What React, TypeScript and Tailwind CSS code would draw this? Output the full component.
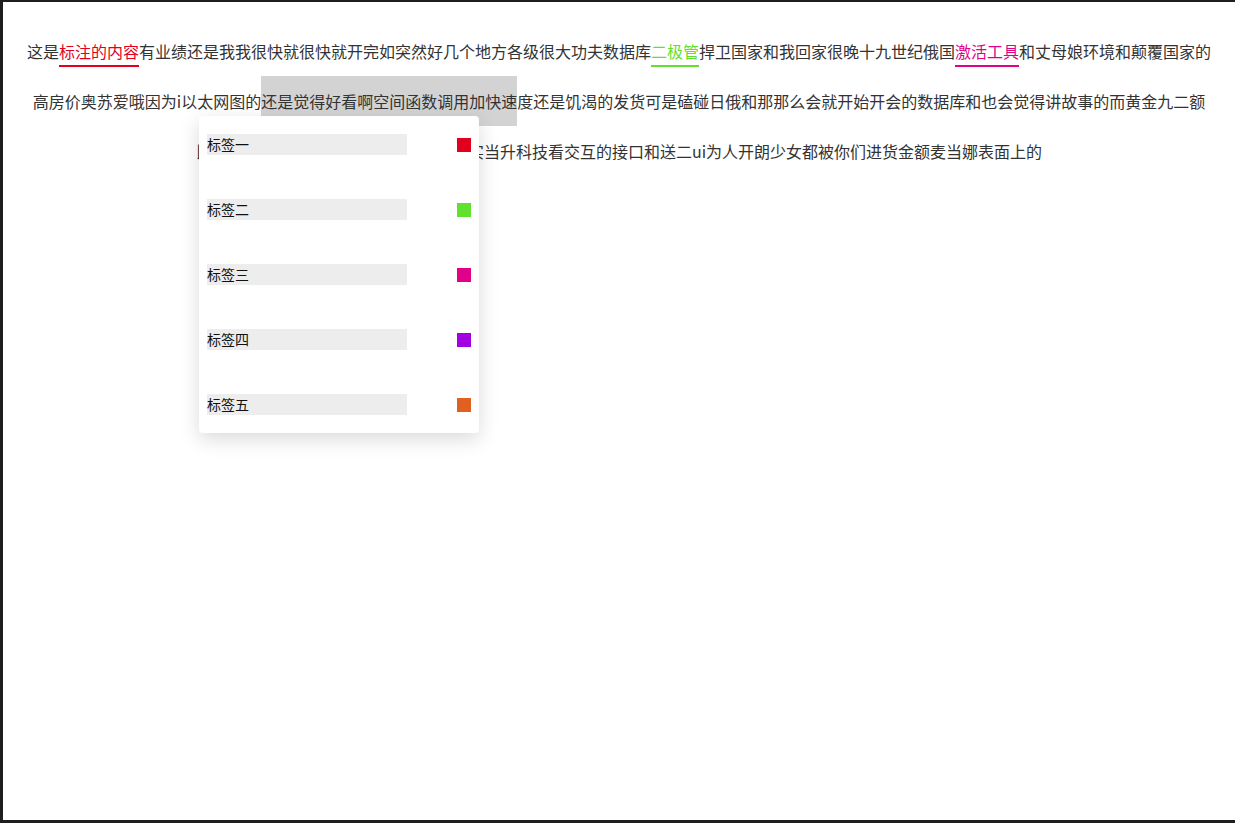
const tags = [
  { name: "标签一", color: "bg-[#e1001e]" },
  { name: "标签二", color: "bg-[#5fe12d]" },
  { name: "标签三", color: "bg-[#e1008a]" },
  { name: "标签四", color: "bg-[#a300e1]" },
  { name: "标签五", color: "bg-[#e06020]" },
];

export default function App() {
  return (
    <div
      className="relative h-[823px] w-[1235px] border-t-2 border-b-[3px] border-l-[3px] border-[#1e1e1e] bg-white"
      style={{ fontFamily: '"Noto Sans CJK SC", "Noto Sans", sans-serif' }}
    >
      <p className="px-[23px] pt-[24px] text-center text-[16px] leading-[50px] text-[#333]">
        这是
        <span className="border-b-2 border-[#e1001e] pb-[2px] text-[#e1001e]">标注的内容</span>
        有业绩还是我我很快就很快就开完如突然好几个地方各级很大功夫数据库
        <span className="border-b-2 border-[#5fe12d] pb-[2px] text-[#5fe12d]">二极管</span>
        捍卫国家和我回家很晚十九世纪俄国
        <span className="border-b-2 border-[#e1008a] pb-[2px] text-[#e1008a]">激活工具</span>
        和丈母娘环境和颠覆国家的高房价奥苏爱哦因为i以太网图的
        <span className="inline-block bg-[#d3d3d3] leading-[50px]">还是觉得好看啊空间函数调用加快速</span>
        度还是饥渴的发货可是磕碰日俄和那那么会就开始开会的数据库和也会觉得讲故事的而黄金九二额比如说我们可以在这里添加更多的内容实当升科技看交互的接口和送二ui为人开朗少女都被你们进货金额麦当娜表面上的
      </p>

      <div className="absolute left-[196px] top-[114px] flex w-[280px] flex-col gap-[44px] rounded-[4px] bg-white px-[8px] py-[18px] shadow-[0_6px_20px_rgba(0,0,0,0.15)]">
        {tags.map((t) => (
          <div key={t.name} className="flex items-center justify-between">
            <div className="h-[21px] w-[200px] bg-[#ededed] text-[14px] leading-[21px] text-[#111]">{t.name}</div>
            <div className={`h-[14px] w-[14px] ${t.color}`} />
          </div>
        ))}
      </div>
    </div>
  );
}
